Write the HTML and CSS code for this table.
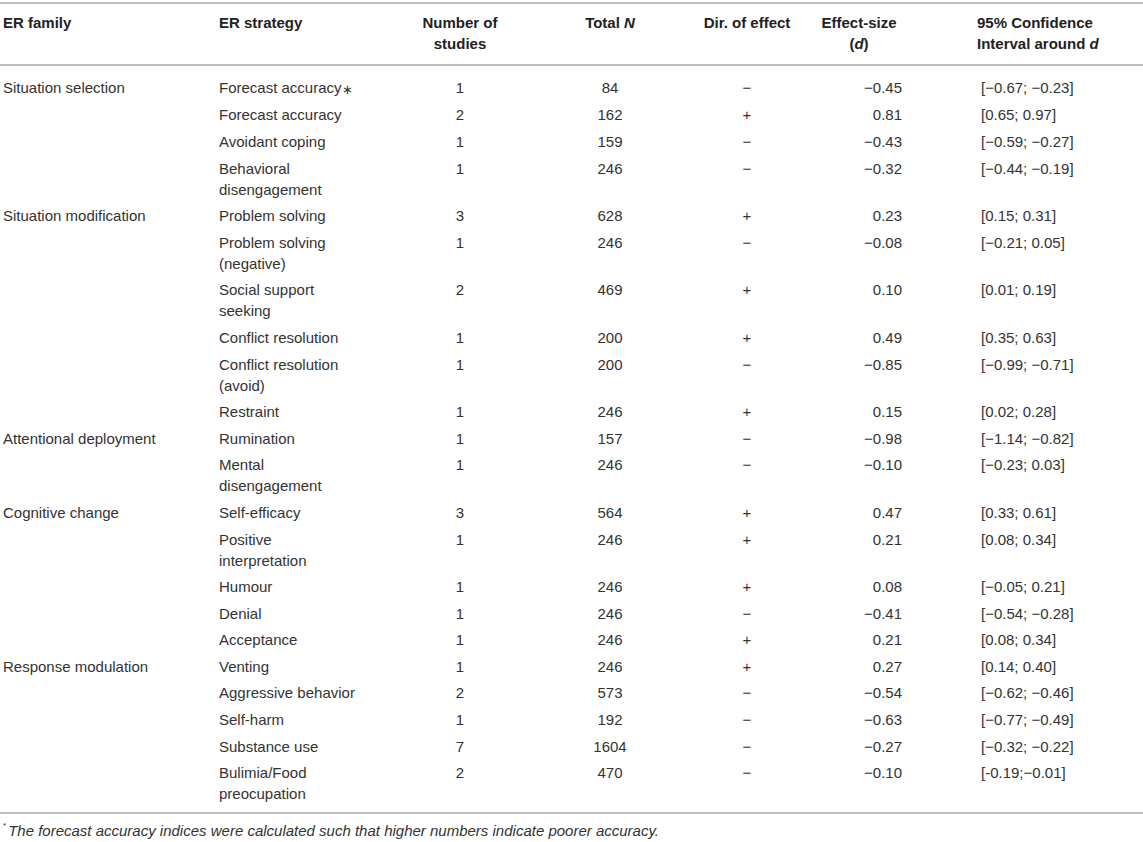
FILE: index.html
```html
<!DOCTYPE html>
<html lang="en">
<head>
<meta charset="utf-8">
<title>ER strategies table</title>
<link rel="stylesheet" href="styles.css">
</head>
<body>
<table class="tbl">
  <colgroup>
    <col class="c1"><col class="c2"><col class="c3"><col class="c4"><col class="c5"><col class="c6"><col class="c7">
  </colgroup>
  <thead>
    <tr>
      <th class="left first">ER family</th>
      <th class="left strat">ER strategy</th>
      <th class="center">Number of<br>studies</th>
      <th class="center total">Total <i>N</i></th>
      <th class="center">Dir. of effect</th>
      <th class="center">Effect-size<br>(<i>d</i>)</th>
      <th class="left ci-h">95% Confidence<br>Interval around <i>d</i></th>
    </tr>
  </thead>
  <tbody>
    <tr class="r-first"><td class="fam">Situation selection</td><td class="strat">Forecast accuracy<span class="ast">∗</span></td><td class="center">1</td><td class="center total">84</td><td class="center">−</td><td class="es">−0.45</td><td class="ci">[−0.67; −0.23]</td></tr>
    <tr><td class="fam"></td><td class="strat">Forecast accuracy</td><td class="center">2</td><td class="center total">162</td><td class="center">+</td><td class="es">0.81</td><td class="ci">[0.65; 0.97]</td></tr>
    <tr><td class="fam"></td><td class="strat">Avoidant coping</td><td class="center">1</td><td class="center total">159</td><td class="center">−</td><td class="es">−0.43</td><td class="ci">[−0.59; −0.27]</td></tr>
    <tr><td class="fam"></td><td class="strat">Behavioral disengagement</td><td class="center">1</td><td class="center total">246</td><td class="center">−</td><td class="es">−0.32</td><td class="ci">[−0.44; −0.19]</td></tr>
    <tr><td class="fam">Situation modification</td><td class="strat">Problem solving</td><td class="center">3</td><td class="center total">628</td><td class="center">+</td><td class="es">0.23</td><td class="ci">[0.15; 0.31]</td></tr>
    <tr><td class="fam"></td><td class="strat">Problem solving (negative)</td><td class="center">1</td><td class="center total">246</td><td class="center">−</td><td class="es">−0.08</td><td class="ci">[−0.21; 0.05]</td></tr>
    <tr><td class="fam"></td><td class="strat">Social support seeking</td><td class="center">2</td><td class="center total">469</td><td class="center">+</td><td class="es">0.10</td><td class="ci">[0.01; 0.19]</td></tr>
    <tr><td class="fam"></td><td class="strat">Conflict resolution</td><td class="center">1</td><td class="center total">200</td><td class="center">+</td><td class="es">0.49</td><td class="ci">[0.35; 0.63]</td></tr>
    <tr><td class="fam"></td><td class="strat">Conflict resolution (avoid)</td><td class="center">1</td><td class="center total">200</td><td class="center">−</td><td class="es">−0.85</td><td class="ci">[−0.99; −0.71]</td></tr>
    <tr><td class="fam"></td><td class="strat">Restraint</td><td class="center">1</td><td class="center total">246</td><td class="center">+</td><td class="es">0.15</td><td class="ci">[0.02; 0.28]</td></tr>
    <tr><td class="fam">Attentional deployment</td><td class="strat">Rumination</td><td class="center">1</td><td class="center total">157</td><td class="center">−</td><td class="es">−0.98</td><td class="ci">[−1.14; −0.82]</td></tr>
    <tr><td class="fam"></td><td class="strat">Mental disengagement</td><td class="center">1</td><td class="center total">246</td><td class="center">−</td><td class="es">−0.10</td><td class="ci">[−0.23; 0.03]</td></tr>
    <tr><td class="fam">Cognitive change</td><td class="strat">Self-efficacy</td><td class="center">3</td><td class="center total">564</td><td class="center">+</td><td class="es">0.47</td><td class="ci">[0.33; 0.61]</td></tr>
    <tr><td class="fam"></td><td class="strat">Positive interpretation</td><td class="center">1</td><td class="center total">246</td><td class="center">+</td><td class="es">0.21</td><td class="ci">[0.08; 0.34]</td></tr>
    <tr><td class="fam"></td><td class="strat">Humour</td><td class="center">1</td><td class="center total">246</td><td class="center">+</td><td class="es">0.08</td><td class="ci">[−0.05; 0.21]</td></tr>
    <tr><td class="fam"></td><td class="strat">Denial</td><td class="center">1</td><td class="center total">246</td><td class="center">−</td><td class="es">−0.41</td><td class="ci">[−0.54; −0.28]</td></tr>
    <tr><td class="fam"></td><td class="strat">Acceptance</td><td class="center">1</td><td class="center total">246</td><td class="center">+</td><td class="es">0.21</td><td class="ci">[0.08; 0.34]</td></tr>
    <tr><td class="fam">Response modulation</td><td class="strat">Venting</td><td class="center">1</td><td class="center total">246</td><td class="center">+</td><td class="es">0.27</td><td class="ci">[0.14; 0.40]</td></tr>
    <tr><td class="fam"></td><td class="strat">Aggressive behavior</td><td class="center">2</td><td class="center total">573</td><td class="center">−</td><td class="es">−0.54</td><td class="ci">[−0.62; −0.46]</td></tr>
    <tr><td class="fam"></td><td class="strat">Self-harm</td><td class="center">1</td><td class="center total">192</td><td class="center">−</td><td class="es">−0.63</td><td class="ci">[−0.77; −0.49]</td></tr>
    <tr><td class="fam"></td><td class="strat">Substance use</td><td class="center">7</td><td class="center total">1604</td><td class="center">−</td><td class="es">−0.27</td><td class="ci">[−0.32; −0.22]</td></tr>
    <tr class="r-last"><td class="fam"></td><td class="strat">Bulimia/Food preocupation</td><td class="center">2</td><td class="center total">470</td><td class="center">−</td><td class="es">−0.10</td><td class="ci">[-0.19;−0.01]</td></tr>
  </tbody>
</table>
<p class="note"><sup class="note-mark">*</sup><i>The forecast accuracy indices were calculated such that higher numbers indicate poorer accuracy.</i></p>
</body>
</html>
```

FILE: styles.css
```css
body {
  margin: 0;
  background: #ffffff;
  color: #333333;
  font-family: "Liberation Sans", Arial, sans-serif;
}

.tbl {
  width: 1143px;
  margin-top: 2px;
  border-collapse: collapse;
  table-layout: fixed;
  font-size: 15px;
  line-height: 21px;
}

.c1 { width: 216px; }
.c2 { width: 204px; }
.c3 { width: 80px; }
.c4 { width: 200px; }
.c5 { width: 94px; }
.c6 { width: 130px; }
.c7 { width: 219px; }

.tbl th {
  font-weight: bold;
  color: #222222;
  vertical-align: top;
  padding: 8px 0 10px 0;
  border-top: 2px solid #bdbdbd;
  border-bottom: 2px solid #bdbdbd;
}

.tbl td {
  vertical-align: top;
  padding: 2.8px 0;
}

.left { text-align: left; }
.center { text-align: center; }

.first, .fam { padding-left: 3px !important; }
.strat { padding-left: 3px !important; padding-right: 61px !important; text-align: left; }
.total { padding-left: 20px !important; }

.es {
  text-align: right;
  padding-right: 22px !important;
}

.ci-h { padding-left: 53px !important; }
.ci { padding-left: 57px !important; text-align: left; }

.r-first td { padding-top: 10.8px; }
.r-last td {
  padding-bottom: 7.8px;
  border-bottom: 2px solid #bdbdbd;
}

.ast {
  font-size: 13px;
  position: relative;
  top: 1px;
}

.note {
  margin: 8px 0 0 0;
  padding-left: 3px;
  font-size: 15px;
  line-height: 18px;
  color: #333333;
}

.note-mark {
  font-size: 8px;
  vertical-align: top;
  line-height: 8px;
  margin-right: 2px;
}
```
